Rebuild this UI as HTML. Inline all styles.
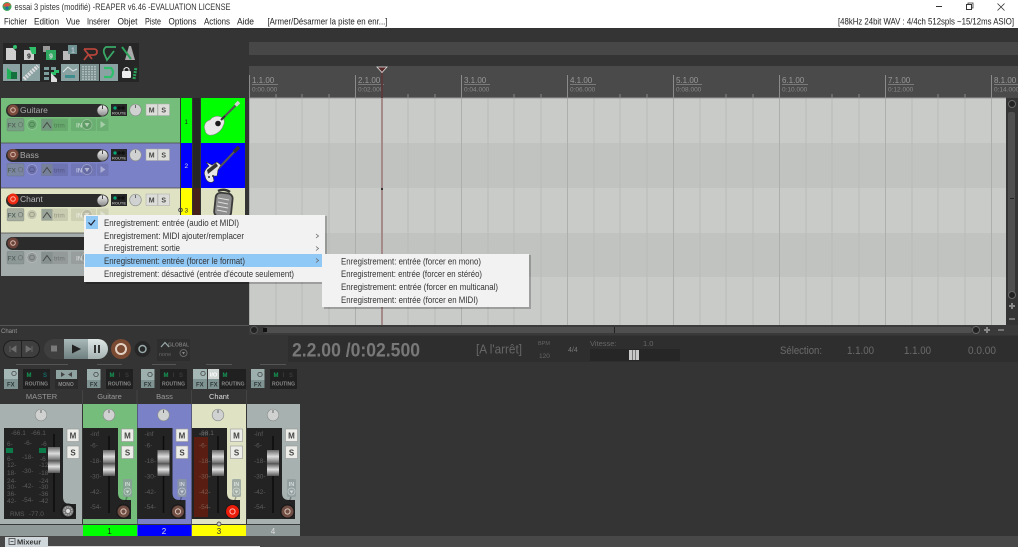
<!DOCTYPE html>
<html lang="fr"><head><meta charset="utf-8"><title>essai 3 pistes - REAPER</title>
<style>
html,body{margin:0;padding:0;width:1018px;height:547px;overflow:hidden;background:#333}
svg{display:block;position:absolute;left:0;top:0}
text{font-family:"Liberation Sans",sans-serif}
.m{font-size:9px;fill:#222}
.c{font-size:9px;fill:#333}
.r1{font-size:8px;fill:#999}
.r2{font-size:6.5px;fill:#8a8a8a}
.db{font-size:6.5px;fill:#5c5c5c}
.bt{font-size:7px;font-weight:bold;fill:#444;text-anchor:middle}
.rt{font-size:5px;fill:#888;font-weight:bold;text-anchor:middle}
</style></head><body>
<svg width="1018" height="547" viewBox="0 0 1018 547" xmlns="http://www.w3.org/2000/svg">
<defs>
<linearGradient id="knob" x1="0" y1="0" x2="0" y2="1"><stop offset="0" stop-color="#f2f2f2"/><stop offset="1" stop-color="#8d8d8d"/></linearGradient>
<linearGradient id="cap" x1="0" y1="0" x2="0" y2="1"><stop offset="0" stop-color="#666"/><stop offset=".25" stop-color="#ddd"/><stop offset=".48" stop-color="#777"/><stop offset=".52" stop-color="#555"/><stop offset=".75" stop-color="#e2e2e2"/><stop offset="1" stop-color="#555"/></linearGradient>
<linearGradient id="play" x1="0" y1="0" x2="0" y2="1"><stop offset="0" stop-color="#a9b8b8"/><stop offset="1" stop-color="#6f8080"/></linearGradient>
<linearGradient id="pause" x1="0" y1="0" x2="0" y2="1"><stop offset="0" stop-color="#dfe6e6"/><stop offset="1" stop-color="#a5b2b2"/></linearGradient>
<g id="kn"><circle r="6" fill="#333"/><circle r="5.2" fill="url(#knob)"/><path d="M0-5V-1.5" stroke="#444" stroke-width="1"/></g>
<g id="pk"><circle r="5.8" fill="#cfd2d0" stroke="#8b8f8d" stroke-width=".7"/><path d="M0-5V-2" stroke="#666" stroke-width="1"/></g>
<g id="trk">
<rect x="6" y="6" width="100" height="13" rx="6.5" fill="#2b2b2b"/>
<rect x="111" y="6" width="16" height="12" fill="#262626"/>
<circle cx="115" cy="10" r="1.6" fill="#0a7"/><circle cx="119" cy="10" r="1.8" fill="#111"/><circle cx="123" cy="10" r="1.8" fill="#111"/>
<text x="119" y="16.500" class="rt" style="font-size:4px;fill:#aaa">ROUTE</text>
<use href="#kn" x="102.500" y="12.500"/><use href="#pk" x="135.500" y="12"/>
<rect x="146" y="6" width="11.500" height="11.500" fill="#dcdcd8" stroke="#aaa" stroke-width=".5"/><rect x="158" y="6" width="11.500" height="11.500" fill="#dcdcd8" stroke="#aaa" stroke-width=".5"/>
<text x="151.700" y="14.700" class="bt">M</text><text x="163.700" y="14.700" class="bt">S</text>
<rect x="7" y="20.500" width="17" height="12.500" rx="1" fill="#7c8a88" fill-opacity=".6" stroke="#555" stroke-opacity=".4" stroke-width=".5"/>
<text x="11.700" y="29.500" style="font-size:6.500px;font-weight:bold;fill:#56625f" text-anchor="middle">FX</text>
<circle cx="20.500" cy="26.700" r="2.300" fill="none" stroke="#666" stroke-width=".6"/>
<circle cx="32" cy="26.500" r="5" fill="#000" fill-opacity=".12" stroke="#fff" stroke-opacity=".28" stroke-width=".7"/><circle cx="32" cy="26.500" r="2.300" fill="none" stroke="#000" stroke-opacity=".3" stroke-width=".7"/>
<rect x="41" y="20.500" width="27" height="12.500" rx="1" fill="#000" fill-opacity=".1"/><rect x="41.500" y="21" width="11" height="11.500" fill="#7c8a88" fill-opacity=".6"/>
<path d="M43 30 L47 24.500 L51 30" fill="none" stroke="#444" stroke-width=".9"/>
<text x="54" y="29.500" style="font-size:6.500px;fill:#000;fill-opacity:.28">trim</text>
<rect x="71" y="20.500" width="25" height="12.500" rx="1" fill="#000" fill-opacity=".08"/>
<text x="76" y="29.600" style="font-size:6.500px;font-weight:bold;fill:#fff;fill-opacity:.5">IN</text>
<circle cx="87" cy="26.500" r="5" fill="#000" fill-opacity=".1" stroke="#fff" stroke-opacity=".35" stroke-width=".7"/><path d="M84.500 25 H89.500 L87 29Z" fill="#fff" fill-opacity=".5"/>
<rect x="97" y="20.500" width="11.500" height="12.500" rx="1" fill="#000" fill-opacity=".08"/><path d="M100.500 23 L105.500 26.500 L100.500 30Z" fill="#fff" fill-opacity=".4"/>
</g>
<g id="top">
<rect x="4" y="3" width="13.500" height="19" fill="#9db0ae"/><rect x="4" y="14" width="13.500" height="8" fill="#7f9492"/>
<text x="10.700" y="20.500" style="font-size:6px;font-weight:bold;fill:#2f3838" text-anchor="middle">FX</text>
<circle cx="13" cy="8.500" r="2.200" fill="none" stroke="#333" stroke-width=".7"/>
<rect x="23" y="3" width="27" height="20" fill="#202020"/>
<text x="29" y="11" style="font-size:6px;font-weight:bold;fill:#149a55" text-anchor="middle">M</text><text x="36.500" y="11" style="font-size:6px;font-weight:bold;fill:#3a3a3a" text-anchor="middle">I</text><text x="44" y="11" style="font-size:6px;font-weight:bold;fill:#3a3a3a" text-anchor="middle">S</text>
<text x="36.500" y="19.500" class="rt">ROUTING</text>
</g>
<g id="fader">
<rect x="0" y="63" width="35" height="91" fill="#232323"/>
<path d="M35 128 Q35 135 42 135 H48 V154 H35Z" fill="#232323"/>
<text x="7" y="71" class="db">-inf</text><text x="7" y="82.500" class="db">-6-</text><text x="7" y="98" class="db">-18-</text><text x="7" y="113.500" class="db">-30-</text><text x="7" y="129" class="db">-42-</text><text x="7" y="144" class="db">-54-</text>
<path d="M26 71 V148" stroke="#0d0d0d" stroke-width="1.500"/>
<rect x="20" y="85" width="12" height="26" fill="url(#cap)"/>
<rect x="38.500" y="64" width="12" height="12.500" fill="#ecece8" stroke="#999" stroke-width=".6"/><rect x="38.500" y="81" width="12" height="12.500" fill="#ecece8" stroke="#999" stroke-width=".6"/>
<text x="44.500" y="73.500" class="bt" style="font-size:8px">M</text><text x="44.500" y="90.500" class="bt" style="font-size:8px">S</text>
<rect x="40" y="114" width="9" height="18" rx="1.500" fill="#8c9a9a" fill-opacity=".75"/>
<text x="44.500" y="121" style="font-size:5.500px;font-weight:bold;fill:#fff;fill-opacity:.6" text-anchor="middle">IN</text>
<circle cx="44.500" cy="126.500" r="3.500" fill="none" stroke="#fff" stroke-opacity=".5" stroke-width=".7"/><path d="M42.500 125.500 H46.500 L44.500 128.500Z" fill="#fff" fill-opacity=".6"/><path d="M44 132 L42.500 136" stroke="#000" stroke-opacity=".3" stroke-width="1.500"/>
<circle cx="40.500" cy="146.500" r="7.500" fill="#1b1b1b"/>
</g>
<g id="recb"><circle r="6" fill="#704e43"/><circle r="2.600" fill="none" stroke="#dcc4ba" stroke-width="1"/></g>
<pattern id="grid" x="249" y="0" width="106" height="10" patternUnits="userSpaceOnUse"><path d="M.5 0V10" stroke="#adafad" stroke-width="1"/><path d="M27 0V10M53 0V10M80 0V10" stroke="#b9bbb9" stroke-width="1"/></pattern>
</defs>

<!-- title + menu -->
<rect width="1018" height="28" fill="#fff"/>
<circle cx="7" cy="6.500" r="4.500" fill="#3aa35e"/><path d="M3 6 A4.500 4.500 0 0 1 11 5 L7 7Z" fill="#d9573c"/><circle cx="7" cy="8" r="1.600" fill="#1c6fa8"/>
<text x="14.500" y="9.800" style="font-size:9.500px;fill:#333" textLength="216" lengthAdjust="spacingAndGlyphs">essai 3 pistes (modifié) -REAPER v6.46 -EVALUATION LICENSE</text>
<path d="M936 6.500H942" stroke="#333"/><rect x="966.500" y="4.500" width="5" height="5" fill="none" stroke="#333"/><path d="M968 4.500V3H973V8H971.500" fill="none" stroke="#333" stroke-width=".8"/><path d="M997.500 3.500L1004.500 10.500M1004.500 3.500L997.500 10.500" stroke="#333" stroke-width=".8"/>
<g class="m"><text x="4" y="24.500" textLength="23" lengthAdjust="spacingAndGlyphs">Fichier</text><text x="34" y="24.500" textLength="25" lengthAdjust="spacingAndGlyphs">Edition</text><text x="66" y="24.500" textLength="14" lengthAdjust="spacingAndGlyphs">Vue</text><text x="87" y="24.500" textLength="23" lengthAdjust="spacingAndGlyphs">Insérer</text><text x="117.500" y="24.500" textLength="20" lengthAdjust="spacingAndGlyphs">Objet</text><text x="145" y="24.500" textLength="16" lengthAdjust="spacingAndGlyphs">Piste</text><text x="168.500" y="24.500" textLength="28" lengthAdjust="spacingAndGlyphs">Options</text><text x="204" y="24.500" textLength="26" lengthAdjust="spacingAndGlyphs">Actions</text><text x="237" y="24.500" textLength="17" lengthAdjust="spacingAndGlyphs">Aide</text><text x="267.500" y="24.500" textLength="120" lengthAdjust="spacingAndGlyphs">[Armer/Désarmer la piste en enr...]</text><text x="838" y="24.500" textLength="176" lengthAdjust="spacingAndGlyphs">[48kHz 24bit WAV : 4/4ch 512spls ~15/12ms ASIO]</text></g>

<!-- main dark -->
<rect y="28" width="1018" height="519" fill="#343434"/>

<!-- toolbar -->
<rect x="3" y="43" width="136" height="20" fill="#262626"/>
<rect x="3" y="63" width="136" height="19" fill="#262626"/>
<g>
<path d="M6 48H13L16 51V60H6Z" fill="#cfcfcf"/><circle cx="15" cy="47" r="2" fill="#2fbf6a"/>
<rect x="24" y="50" width="10" height="10" fill="#cfcfcf"/><path d="M29 47H36V54H32Z" fill="#2fbf6a"/><text x="27" y="58.500" style="font-size:7px;font-weight:bold;fill:#222">9</text>
<rect x="43" y="46" width="7" height="6" fill="#999"/><rect x="46" y="50" width="10" height="10" fill="#2fa862"/><text x="49" y="58.500" style="font-size:7px;font-weight:bold;fill:#ddd">9</text>
<path d="M63 51H68L70 53V60H63Z" fill="#bbb"/><path d="M68 45H77V54H68Z" fill="#6f9191"/><text x="71" y="52.500" style="font-size:7px;fill:#dde">1</text>
<path d="M84 49H94Q97 49 97 52T93 55H88M88 55L84 60M84 49L92 59" fill="none" stroke="#b5443b" stroke-width="1.800"/>
<path d="M116 47H106Q103 49 104 53L107 60L114 51" fill="none" stroke="#39a866" stroke-width="1.800"/>
<path d="M125 60L129 46H131L135 60Z" fill="#aaa"/><path d="M122 47L131 59" stroke="#2ba35a" stroke-width="2"/>
</g>
<rect x="3" y="64" width="17" height="17" fill="#8ba2a3"/><path d="M7 68L14 73V79H7Z" fill="#22b35a"/><rect x="11" y="72" width="6" height="7" fill="#14703c"/>
<rect x="22" y="64" width="18" height="17" fill="#8ba2a3"/><path d="M24 79L38 66" stroke="#ddd" stroke-width="4" stroke-dasharray="2 1"/>
<rect x="44" y="67" width="5" height="3" fill="#7d9c9c"/><rect x="51" y="67" width="5" height="3" fill="#7d9c9c"/><rect x="44" y="72" width="5" height="3" fill="#7d9c9c"/><rect x="51" y="72" width="5" height="3" fill="#2fbf6a"/><rect x="44" y="77" width="5" height="3" fill="#7d9c9c"/><path d="M51 73L57 79V82H51Z" fill="#ddd"/><rect x="54" y="70" width="5" height="3" fill="#2fbf6a"/>
<rect x="61" y="64" width="18" height="17" fill="#8ba2a3"/><path d="M63 72L68 67L73 71L77 69" fill="none" stroke="#dfe6e6"/><rect x="65" y="75" width="10" height="3" fill="#3f8d8d"/>
<rect x="80" y="64" width="19" height="17" fill="#7b8f8f"/><path d="M83 66V80M86 66V80M89 66V80M92 66V80M95 66V80" stroke="#bfcaca" stroke-width="1.500" stroke-dasharray="1.500 1"/>
<rect x="100" y="64" width="18" height="17" fill="#8ba2a3"/><path d="M104 68H111Q115 72 111 77H104" fill="none" stroke="#2fbf6a" stroke-width="2.200"/>
<rect x="122" y="71" width="9" height="7" rx="1" fill="#eee"/><path d="M124 71V69Q126.500 66 129 69V71" fill="none" stroke="#eee"/><path d="M134 79L136 67" stroke="#2ba35a" stroke-width="3" stroke-dasharray="2 1"/>

<!-- arrange top -->
<rect x="249" y="42" width="769" height="13" fill="#474747"/>
<rect x="249" y="66" width="769" height="32" fill="#4a4a4a"/>
<g>
<rect x="249" y="98" width="757" height="45" fill="#c9cbc9"/><rect x="249" y="143" width="757" height="45" fill="#c1c3c1"/><rect x="249" y="188" width="757" height="45" fill="#c9cbc9"/><rect x="249" y="233" width="757" height="44" fill="#c1c3c1"/><rect x="249" y="277" width="757" height="48" fill="#c9cbc9"/>
<rect x="249" y="98" width="757" height="227" fill="url(#grid)"/>
<rect x="249" y="97.500" width="757" height="1" fill="#999"/>
</g>
<g stroke="#8b8b8b"><path d="M249.500 75V98M355.500 75V98M461.500 75V98M567.500 75V98M673.500 75V98M779.500 75V98M885.500 75V98M991.500 75V98"/><path d="M276 94V98M302 94V98M329 94V98M408 94V98M435 94V98M514 94V98M541 94V98M620 94V98M647 94V98M726 94V98M753 94V98M832 94V98M859 94V98M938 94V98M965 94V98" stroke="#888"/></g>
<path d="M252 84.500H278M358 84.500H384M464 84.500H490M570 84.500H596M676 84.500H702M782 84.500H808M888 84.500H914M994 84.500H1018" stroke="#8a8a8a" stroke-width=".7"/>
<g>
<text x="252" y="83" class="r1">1.1.00</text><text x="252" y="91.500" class="r2">0:00.000</text>
<text x="358" y="83" class="r1">2.1.00</text><text x="358" y="91.500" class="r2">0:02.000</text>
<text x="464" y="83" class="r1">3.1.00</text><text x="464" y="91.500" class="r2">0:04.000</text>
<text x="570" y="83" class="r1">4.1.00</text><text x="570" y="91.500" class="r2">0:06.000</text>
<text x="676" y="83" class="r1">5.1.00</text><text x="676" y="91.500" class="r2">0:08.000</text>
<text x="782" y="83" class="r1">6.1.00</text><text x="782" y="91.500" class="r2">0:10.000</text>
<text x="888" y="83" class="r1">7.1.00</text><text x="888" y="91.500" class="r2">0:12.000</text>
<text x="994" y="83" class="r1">8.1.00</text><text x="994" y="91.500" class="r2">0:14.000</text>
</g>
<rect x="381" y="72" width="2" height="253" fill="#a58a8a"/><rect x="381" y="72" width="2" height="26" fill="#5a3a3a"/>
<path d="M377 67H387L382 72.500Z" fill="#5a2a2a" stroke="#ddd" stroke-width=".8"/>
<rect x="381" y="188" width="2" height="2" fill="#333"/>

<!-- scrollbars -->
<rect x="249" y="325" width="769" height="10" fill="#3a3a3a"/>
<circle cx="254" cy="330" r="3.500" fill="#222" stroke="#555"/><rect x="264" y="327" width="708" height="6" rx="2" fill="#4f4f4f"/><rect x="263" y="328" width="4" height="4" fill="#111"/>
<rect x="614" y="327" width="1" height="6" fill="#222"/>
<circle cx="976" cy="330" r="3.500" fill="#222" stroke="#666"/><path d="M984 330H990M987 327V333" stroke="#888" stroke-width="2"/><path d="M998 330H1004" stroke="#888" stroke-width="1.500"/>
<rect x="1008" y="112" width="7" height="186" rx="2" fill="#4f4f4f"/><circle cx="1012" cy="104" r="3.500" fill="#222" stroke="#666"/><circle cx="1012" cy="295" r="3.500" fill="#222" stroke="#666"/><rect x="1010" y="198" width="4" height="1" fill="#222"/>
<path d="M1009 306H1015M1012 303V309" stroke="#888" stroke-width="2"/><path d="M1009 319H1015" stroke="#888" stroke-width="1.500"/>

<!-- tracks -->
<rect x="0" y="97" width="1" height="180" fill="#333"/>
<rect x="1" y="98" width="179" height="45" fill="#74bd7b"/><rect x="1" y="143" width="179" height="45" fill="#7b81c6"/><rect x="1" y="188" width="179" height="45" fill="#e0e2c4"/><rect x="1" y="233" width="179" height="43" fill="#a4acab"/>
<path d="M1 143H180M1 188H180M1 233H180" stroke="#4a4a4a" stroke-width=".7"/>
<use href="#trk" y="98"/><circle cx="13" cy="110" r="5.500" fill="#7a4a3d"/><circle cx="13" cy="110" r="2.300" fill="none" stroke="#d8b9ac"/>
<text x="20" y="113" style="font-size:8.500px;fill:#aaa">Guitare</text>
<use href="#trk" y="143"/><circle cx="13" cy="154.500" r="5.500" fill="#7a4a3d"/><circle cx="13" cy="154.500" r="2.300" fill="none" stroke="#d8b9ac"/>
<text x="20" y="158" style="font-size:8.500px;fill:#aaa">Bass</text>
<use href="#trk" y="188"/><circle cx="13" cy="199" r="5.500" fill="#ee2a12"/><circle cx="13" cy="199" r="2.300" fill="none" stroke="#ffb3a0"/>
<text x="20" y="202" style="font-size:8.500px;fill:#bbb">Chant</text>
<use href="#trk" y="231"/><circle cx="13" cy="243" r="5.500" fill="#6b4239"/><circle cx="13" cy="243" r="2.300" fill="none" stroke="#d8b9ac"/>

<rect x="181" y="98" width="11" height="45" fill="#00ff00"/><rect x="181" y="143" width="11" height="45" fill="#0000ff"/><rect x="181" y="188" width="11" height="30" fill="#ffff00"/>
<rect x="193" y="98" width="7" height="90" fill="#262626"/><rect x="193" y="188" width="7" height="30" fill="#46201a"/>
<rect x="201" y="98" width="44" height="45" fill="#00ff00"/><rect x="201" y="143" width="44" height="45" fill="#0000ff"/><rect x="201" y="188" width="44" height="45" fill="#e0e2c4"/>
<text x="184.500" y="124" style="font-size:6px;fill:#222">1</text><text x="184.500" y="168" style="font-size:6.500px;fill:#ddd">2</text><text x="184.500" y="212.500" style="font-size:6.500px;fill:#333">3</text>
<circle cx="180.500" cy="210" r="1.800" fill="none" stroke="#444"/>
<!-- acoustic guitar -->
<path d="M221 120L236 105" stroke="#555" stroke-width="2"/><path d="M235.500 105.500L239 102" stroke="#d0d0d0" stroke-width="3.500"/>
<path d="M205 130C203 125 206 121 210 120C212 117 217 115 221 117C225 119 225 123 223 126C221 132 214 136 209 135C207 134.500 205.500 133 205 130Z" fill="#e8e8e8" stroke="#888" stroke-width=".6"/><circle cx="218" cy="123.500" r="2.800" fill="#1a1a1a"/>
<path d="M221 120L225 116" stroke="#333" stroke-width="2"/>
<!-- bass -->
<path d="M217 170L235 151" stroke="#555" stroke-width="2.200"/><path d="M234 152L239 147" stroke="#333" stroke-width="3.500"/>
<path d="M205 176C203 172 206 168 209 166L206 162L212 165L217 162L221 165L218 170L217 176L213 176L214 181C211 184 206 182 205 176Z" fill="#e6e6e6" stroke="#333" stroke-width=".6"/>
<path d="M208 174L218 166L216 163L207 170Z" fill="#333"/><circle cx="213" cy="176" r="1" fill="#333"/><circle cx="209" cy="177" r="1" fill="#333"/>
<!-- mic -->
<g transform="translate(214 190)"><rect x="1" y="3" width="17" height="24" rx="5" fill="#8e8e8e" stroke="#3a3a3a" stroke-width="1.800" transform="rotate(6 9 14)"/><path d="M4 8L15 10M4 12L14 14M3 16L14 18M3 20L13 22" stroke="#ddd" stroke-width=".9"/><path d="M4 1 Q10 -2 16 2" stroke="#333" stroke-width="2.500" fill="none"/></g>

<!-- context menus -->
<rect x="86" y="216" width="241" height="68" fill="#000" opacity=".22"/>
<rect x="84" y="215" width="241" height="67" fill="#f2f2f2"/>
<rect x="86" y="216" width="12" height="13" fill="#90c8f6"/><path d="M88.500 222.500L91 225L95 220" fill="none" stroke="#223" stroke-width="1.200"/>
<rect x="85" y="254" width="240" height="13" fill="#90c8f6"/>
<g class="c">
<text x="104" y="226" textLength="135" lengthAdjust="spacingAndGlyphs">Enregistrement: entrée (audio et MIDI)</text>
<text x="104" y="239" textLength="140" lengthAdjust="spacingAndGlyphs">Enregistrement: MIDI ajouter/remplacer</text>
<text x="104" y="251" textLength="76" lengthAdjust="spacingAndGlyphs">Enregistrement: sortie</text>
<text x="104" y="264" textLength="141" lengthAdjust="spacingAndGlyphs">Enregistrement: entrée (forcer le format)</text>
<text x="104" y="277" textLength="190" lengthAdjust="spacingAndGlyphs">Enregistrement: désactivé (entrée d'écoute seulement)</text>
</g>
<path d="M316 234L318.500 236L316 238M316 246.500L318.500 248.500L316 250.500M316 258.500L318.500 260.500L316 262.500" fill="none" stroke="#666" stroke-width=".8"/>
<rect x="324" y="255" width="207" height="54" fill="#000" opacity=".22"/>
<rect x="322" y="254" width="207" height="53" fill="#f2f2f2"/>
<g class="c">
<text x="341" y="264.500" textLength="140" lengthAdjust="spacingAndGlyphs">Enregistrement: entrée (forcer en mono)</text>
<text x="341" y="277" textLength="141" lengthAdjust="spacingAndGlyphs">Enregistrement: entrée (forcer en stéréo)</text>
<text x="341" y="290" textLength="157" lengthAdjust="spacingAndGlyphs">Enregistrement: entrée (forcer en multicanal)</text>
<text x="341" y="303" textLength="137" lengthAdjust="spacingAndGlyphs">Enregistrement: entrée (forcer en MIDI)</text>
</g>

<!-- transport -->
<path d="M0 325.500H249" stroke="#555"/>
<text x="1" y="333" style="font-size:6px;fill:#999">Chant</text>
<rect x="3" y="340" width="37" height="18" rx="9" fill="#1f1f1f"/><rect x="4" y="341" width="35" height="16" rx="8" fill="#3f3f3f"/><path d="M21.500 341V357" stroke="#222"/>
<path d="M10 346V352M16 346L11.500 349L16 352Z M26 346L31 349L26 352ZM32 346V352" fill="#6f6f6f" stroke="#6f6f6f" stroke-width=".8"/>
<path d="M54 339H64V359H54A10 10 0 0 1 54 339Z" fill="#3f3f3f"/><rect x="64" y="339" width="24" height="20" fill="url(#play)"/><path d="M88 339H98A10 10 0 0 1 98 359H88Z" fill="url(#pause)"/>
<rect x="51" y="345.500" width="6" height="6" fill="#7a7a7a"/><path d="M72 344.500L81 349L72 353.500Z" fill="#222"/><rect x="94" y="345" width="2" height="8" fill="#333"/><rect x="98" y="345" width="2" height="8" fill="#333"/>
<circle cx="121" cy="349" r="10" fill="#7a4a32"/><circle cx="121" cy="349" r="5" fill="none" stroke="#e3d2c4" stroke-width="2"/>
<circle cx="142.500" cy="349" r="8" fill="#262626"/><circle cx="142.500" cy="349" r="3.500" fill="none" stroke="#9aa" stroke-width="1.500"/>
<rect x="157" y="339" width="33" height="22" fill="#2e2e2e"/>
<path d="M161 347L165 342.500L169 347" fill="none" stroke="#9aa" stroke-width="1.200"/><text x="168" y="346.500" style="font-size:5px;font-weight:bold;fill:#777">GLOBAL</text>
<text x="159" y="356" style="font-size:5.500px;fill:#666">none</text><circle cx="183.500" cy="353" r="3.500" fill="none" stroke="#666"/><path d="M182 352H185L183.500 354.500Z" fill="#888"/>

<rect x="288" y="336" width="730" height="26" fill="#2e2e2e"/>
<text x="292" y="356.500" style="font-size:19px;font-weight:bold;fill:#787878" textLength="128" lengthAdjust="spacingAndGlyphs">2.2.00 /0:02.500</text>
<text x="476" y="353.500" style="font-size:13px;fill:#666" textLength="46" lengthAdjust="spacingAndGlyphs">[A l'arrêt]</text>
<text x="538" y="345" style="font-size:5.500px;fill:#666">BPM</text><text x="539" y="358" style="font-size:6.500px;fill:#666">120</text>
<text x="568" y="352" style="font-size:7px;fill:#777">4/4</text>
<text x="590" y="346" style="font-size:7.500px;fill:#666">Vitesse:</text><text x="643" y="346" style="font-size:7.500px;fill:#666">1.0</text>
<rect x="590" y="349" width="90" height="12" fill="#262626"/><rect x="629" y="350" width="10" height="10" fill="#c9c9c9"/><rect x="632" y="350" width="1" height="10" fill="#777"/><rect x="635" y="350" width="1" height="10" fill="#777"/>
<g style="font-size:11px;fill:#6b6b6b"><text x="780" y="354" textLength="42" lengthAdjust="spacingAndGlyphs">Sélection:</text><text x="847" y="354" textLength="27" lengthAdjust="spacingAndGlyphs">1.1.00</text><text x="904" y="354" textLength="27" lengthAdjust="spacingAndGlyphs">1.1.00</text><text x="968" y="354" textLength="28" lengthAdjust="spacingAndGlyphs">0.0.00</text></g>

<!-- mixer top -->
<path d="M16 364.500H68M97 364.500H122M152 364.500H176M206 364.500H232M260 364.500H286" stroke="#555"/>
<g transform="translate(0 366)">
<rect x="4" y="3" width="14" height="20" fill="#a5b7b5"/><rect x="4" y="13" width="14" height="10" fill="#7f9492"/>
<text x="7" y="20.500" style="font-size:6px;font-weight:bold;fill:#2f3838">FX</text><circle cx="14" cy="7.500" r="2.200" fill="none" stroke="#333" stroke-width=".7"/>
<rect x="23" y="3" width="27" height="20" fill="#202020"/>
<text x="29" y="11" style="font-size:6px;font-weight:bold;fill:#149a55" text-anchor="middle">M</text><text x="45" y="11" style="font-size:6px;font-weight:bold;fill:#146a65" text-anchor="middle">S</text>
<text x="36.500" y="19.500" class="rt">ROUTING</text>
<rect x="56" y="4" width="21" height="9" fill="#8ea2a0"/><path d="M61 6V11L65 8.500ZM72 6V11L68 8.500Z" fill="#444"/>
<rect x="55" y="13" width="23" height="10" fill="#2b2b2b"/><text x="66" y="20" class="rt">MONO</text>
</g>
<use href="#top" x="83" y="366"/><use href="#top" x="137" y="366"/>
<g transform="translate(193 366)"><rect x="0" y="3" width="14" height="20" fill="#a5b7b5"/><rect x="0" y="13" width="14" height="10" fill="#7f9492"/><text x="3" y="20.500" style="font-size:6px;font-weight:bold;fill:#2f3838">FX</text><circle cx="10" cy="7.500" r="2.200" fill="none" stroke="#333" stroke-width=".7"/>
<rect x="15" y="3" width="11" height="10" fill="#cfd6d4"/><rect x="15" y="13" width="11" height="10" fill="#7f9492"/><text x="20.500" y="10.500" style="font-size:5.500px;font-weight:bold;fill:#fff" text-anchor="middle">I/O</text><text x="17" y="20.500" style="font-size:6px;font-weight:bold;fill:#2f3838">FX</text>
<rect x="27" y="3" width="26" height="20" fill="#202020"/><text x="32" y="11" style="font-size:6px;font-weight:bold;fill:#149a55" text-anchor="middle">M</text><text x="40" y="19.500" class="rt">ROUTING</text></g>
<use href="#top" x="247" y="366"/>
<g style="font-size:7.500px;fill:#999;text-anchor:middle"><text x="41.500" y="399">MASTER</text><text x="109.500" y="399">Guitare</text><text x="164.500" y="399">Bass</text><text x="219" y="399" style="fill:#ddd">Chant</text></g>
<path d="M82.500 390V404M137 390V404M191.500 390V404M246.500 390V404" stroke="#444"/>

<!-- mixer strips -->
<rect x="0" y="404" width="82" height="120" fill="#a7b1b0"/>
<rect x="83" y="404" width="54" height="120" fill="#74bd7b"/><rect x="137.500" y="404" width="54" height="120" fill="#7b81c6"/><rect x="192" y="404" width="54" height="120" fill="#e0e2c4"/><rect x="247" y="404" width="53" height="120" fill="#a7b1b0"/>
<use href="#pk" x="41" y="415"/><use href="#pk" x="109" y="415"/><use href="#pk" x="163.500" y="415"/><use href="#pk" x="218" y="415"/><use href="#pk" x="273" y="415"/>

<!-- master -->
<path d="M4 428H63V497Q63 504 70 504H76V519H4Z" fill="#232323"/>
<text x="11" y="435" class="db">-66.1</text><text x="31" y="435" class="db">-66.1</text>
<rect x="6" y="448" width="7" height="5" fill="#0d7a4a"/><rect x="39" y="448" width="7" height="5" fill="#0d7a4a"/>
<g class="db"><text x="7" y="446">6-</text><text x="7" y="461">6-</text><text x="7" y="467">12-</text><text x="7" y="475">18-</text><text x="7" y="483">24-</text><text x="7" y="489">30-</text><text x="7" y="496">36-</text><text x="7" y="503">42-</text>
<text x="24" y="445">-6-</text><text x="22" y="459">-18-</text><text x="22" y="473">-30-</text><text x="22" y="488">-42-</text><text x="22" y="502">-54-</text>
<text x="41" y="446">-6</text><text x="40" y="461">-6</text><text x="39" y="467">-12</text><text x="39" y="475">-18</text><text x="39" y="483">-24</text><text x="39" y="489">-30</text><text x="39" y="496">-36</text><text x="39" y="503">-42</text></g>
<text x="10" y="516" class="db">RMS</text><text x="29" y="516" class="db">-77.0</text>
<path d="M54 434V512" stroke="#0d0d0d" stroke-width="1.500"/><rect x="48" y="447" width="12" height="26" fill="url(#cap)"/>
<rect x="67" y="429" width="12" height="12.500" fill="#ecece8" stroke="#999" stroke-width=".6"/><rect x="67" y="446" width="12" height="12.500" fill="#ecece8" stroke="#999" stroke-width=".6"/>
<text x="73" y="438.500" class="bt" style="font-size:8px">M</text><text x="73" y="455.500" class="bt" style="font-size:8px">S</text>
<circle cx="68" cy="511" r="7.500" fill="#1b1b1b"/><circle cx="68" cy="511" r="5.500" fill="#777"/><circle cx="68" cy="511" r="2" fill="#ddd"/><circle cx="68" cy="511" r="4" fill="none" stroke="#bbb" stroke-dasharray="1.500 1"/>

<!-- channels -->
<use href="#fader" x="83" y="365"/><use href="#recb" x="123.500" y="511.500"/>
<use href="#fader" x="137.500" y="365"/><use href="#recb" x="178" y="511.500"/>
<use href="#fader" x="192" y="365"/>
<rect x="194" y="437" width="14" height="80" fill="#5a1d12"/>
<g class="db" style="fill:#7a5a50"><text x="199" y="435" style="fill:#666">-66.1</text><text x="199" y="447.500">-6-</text><text x="199" y="463">-18-</text><text x="199" y="478.500">-30-</text><text x="199" y="494">-42-</text><text x="199" y="509">-54-</text></g>
<circle cx="232.500" cy="511.500" r="6.500" fill="#ec1c0a"/><circle cx="232.500" cy="511.500" r="2.600" fill="none" stroke="#ffb5a5"/>
<use href="#fader" x="247" y="365"/><use href="#recb" x="287.500" y="511.500"/>

<!-- numbers -->
<rect x="0" y="524" width="300" height="12" fill="#8f9998"/><path d="M0 524.500H300" stroke="#3a3a3a"/>
<rect x="83" y="525" width="54" height="11" fill="#00ff00"/><rect x="137.500" y="525" width="54" height="11" fill="#0000ff"/><rect x="192" y="525" width="54" height="11" fill="#ffff00"/>
<g style="font-size:8px;text-anchor:middle"><text x="109.500" y="534" fill="#222">1</text><text x="164" y="534" fill="#ddd">2</text><text x="219" y="534" fill="#333">3</text><text x="273" y="534" fill="#ddd">4</text></g>
<circle cx="219" cy="524" r="2" fill="#ccc" stroke="#333" stroke-width=".7"/>

<!-- tab bar -->
<rect x="0" y="536" width="1018" height="11" fill="#484848"/>
<rect x="5" y="537" width="43" height="10" fill="#d0d8dc"/>
<rect x="9" y="538.500" width="6" height="6" fill="none" stroke="#444" stroke-width=".8"/><path d="M10.500 541.500H13.500" stroke="#444" stroke-width=".8"/>
<text x="17" y="544.500" style="font-size:7.500px;font-weight:bold;fill:#333">Mixeur</text>
<rect x="48" y="546" width="212" height="1" fill="#ddd"/>
</svg>
</body></html>
